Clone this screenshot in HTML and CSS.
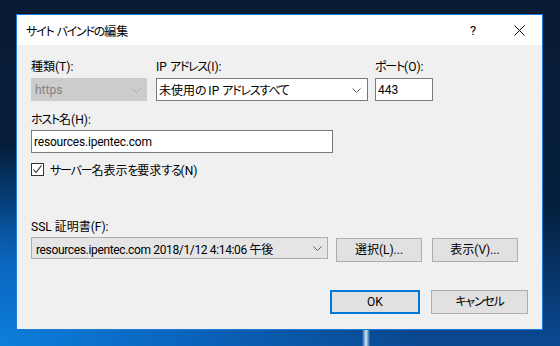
FILE: index.html
```html
<!DOCTYPE html>
<html lang="ja">
<head>
    <meta charset="UTF-8">
    <title>サイト バインドの編集</title>
    <link rel="stylesheet" href="styles.css">
</head>
<body>

<div class="desktop">
    <div class="window">
        <div class="titlebar">
            <span class="title"><span class="kana">サイト</span> <span class="kana">バインドの</span>編集</span>
            <div class="caption">
                <span class="cap-btn help">?</span>
                <span class="cap-btn">
                    <svg width="11" height="11" viewBox="0 0 11 11"><path d="M0.5 0.5 L10.5 10.5 M10.5 0.5 L0.5 10.5" stroke="#000" stroke-width="1" fill="none"/></svg>
                </span>
            </div>
        </div>

        <div class="content">
            <div class="row">
                <div class="field f-type">
                    <label>種類(T):</label>
                    <div class="combo disabled">
                        <span>https</span>
                        <svg class="chev" width="9" height="5" viewBox="0 0 9 5"><path d="M0.5 0.5 L4.5 4.5 L8.5 0.5" stroke="#a8a8a8" fill="none"/></svg>
                    </div>
                </div>
                <div class="field f-ip">
                    <label>IP <span class="kana">アドレス</span>(I):</label>
                    <div class="combo edit">
                        <span>未使用<span class="kana">の</span> IP <span class="kana">アドレスすべて</span></span>
                        <svg class="chev" width="9" height="5" viewBox="0 0 9 5"><path d="M0.5 0.5 L4.5 4.5 L8.5 0.5" stroke="#606060" fill="none"/></svg>
                    </div>
                </div>
                <div class="field f-port">
                    <label><span class="kana">ポート</span>(O):</label>
                    <div class="textbox">443</div>
                </div>
            </div>

            <div class="field f-host">
                <label><span class="kana">ホスト</span>名(H):</label>
                <div class="textbox">resources.ipentec.com</div>
            </div>

            <div class="check-row">
                <span class="checkbox">
                    <svg width="11" height="11" viewBox="0 0 11 11"><path d="M1.5 5.5 L4 8.5 L9.5 1.5" stroke="#222" stroke-width="1.1" fill="none"/></svg>
                </span>
                <span><span class="kana">サーバー</span>名表示<span class="kana">を</span>要求<span class="kana">する</span>(N)</span>
            </div>

            <div class="field f-ssl">
                <label>SSL 証明書(F):</label>
                <div class="ssl-row">
                    <div class="combo list">
                        <span>resources.ipentec.com 2018/1/12 4:14:06 午後</span>
                        <svg class="chev" width="9" height="5" viewBox="0 0 9 5"><path d="M0.5 0.5 L4.5 4.5 L8.5 0.5" stroke="#606060" fill="none"/></svg>
                    </div>
                    <button class="btn btn-select">選択(L)...</button>
                    <button class="btn btn-view">表示(V)...</button>
                </div>
            </div>

            <div class="footer">
                <button class="btn btn-ok">OK</button>
                <button class="btn btn-cancel"><span class="kana">キャンセル</span></button>
            </div>
        </div>
    </div>
</div>

</body>
</html>
```

FILE: styles.css
```css
body {
    margin: 0;
    font-family: Roboto, "Noto Sans CJK JP", sans-serif;
    font-feature-settings: "palt";
    font-size: 12px;
    color: #000;
}
.kana {
    letter-spacing: -1.2px;
}
.desktop {
    width: 560px;
    height: 346px;
    box-sizing: border-box;
    padding: 14px 0 0 16px;
    overflow: hidden;
    background:
        linear-gradient(to right, transparent 362px, rgba(230, 245, 255, 0.9) 366px, transparent 370px) bottom / 100% 17px no-repeat,
        radial-gradient(ellipse 420px 200px at 0% 100%, #0d7fdc 0%, #0a66c0 40%, rgba(10, 70, 140, 0) 100%),
        linear-gradient(to bottom, #0a1b33 0%, #031f3e 60%, #0a4a94 100%);
}
.window {
    width: 527px;
    height: 316px;
    box-sizing: border-box;
    border: 1px solid #1a7bd6;
    background-color: #f0f0f0;
    display: flex;
    flex-direction: column;
}
.titlebar {
    height: 30px;
    background-color: #ffffff;
    display: flex;
    align-items: center;
    justify-content: space-between;
}
.title {
    padding-left: 9px;
}
.caption {
    display: flex;
    height: 30px;
}
.cap-btn {
    width: 46px;
    height: 30px;
    display: flex;
    align-items: center;
    justify-content: center;
}
.help {
    font-size: 13px;
}
.content {
    padding: 14px 14px 0 14px;
    flex: 1;
}
.row {
    display: flex;
}
.field label {
    display: block;
    height: 16px;
    line-height: 16px;
    margin-bottom: 3px;
}
.f-type { width: 116px; }
.f-ip { width: 212px; margin-left: 9px; }
.f-port { width: 58px; margin-left: 7px; }
.combo, .textbox {
    height: 23px;
    box-sizing: border-box;
    display: flex;
    align-items: center;
    position: relative;
    white-space: nowrap;
}
.combo .chev {
    position: absolute;
    right: 5px;
    top: 9px;
}
.combo.disabled {
    background-color: #cccccc;
    border: 1px solid #cccccc;
    color: #838383;
    padding-left: 3px;
}
.combo.edit {
    background-color: #ffffff;
    border: 1px solid #7a7a7a;
    padding-left: 2px;
}
.combo.edit .chev {
    right: 6px;
}
.textbox {
    background-color: #ffffff;
    border: 1px solid #7a7a7a;
    padding-left: 2px;
}
.f-host {
    margin-top: 11px;
}
.f-host label {
    margin-bottom: 2px;
}
.f-host .textbox {
    width: 302px;
    letter-spacing: -0.2px;
}
.check-row {
    margin-top: 10px;
    height: 13px;
    display: flex;
    align-items: center;
}
.checkbox {
    width: 13px;
    height: 13px;
    box-sizing: border-box;
    border: 1px solid #333333;
    background-color: #ffffff;
    display: flex;
    align-items: center;
    justify-content: center;
    margin-right: 6px;
}
.f-ssl {
    margin-top: 43px;
}
.f-ssl label {
    margin-bottom: 2px;
}
.ssl-row {
    display: flex;
    align-items: flex-start;
}
.combo.list {
    width: 297px;
    height: 22px;
    background-color: #e5e5e5;
    border: 1px solid #adadad;
    padding-left: 4px;
    letter-spacing: -0.35px;
}
.combo.list .chev {
    top: 8px;
}
.btn {
    font-family: inherit;
    font-feature-settings: inherit;
    font-size: 12px;
    color: #000;
    height: 24px;
    box-sizing: border-box;
    background-color: #e1e1e1;
    border: 1px solid #adadad;
    padding: 0;
    line-height: 20px;
}
.btn-select {
    width: 86px;
    margin: 1px 0 0 8px;
}
.btn-view {
    width: 86px;
    margin: 1px 0 0 10px;
}
.footer {
    margin-top: 28px;
    display: flex;
    justify-content: flex-end;
}
.btn-ok {
    width: 90px;
    border: 2px solid #0078d7;
}
.btn-cancel {
    width: 97px;
    margin-left: 11px;
}
```
